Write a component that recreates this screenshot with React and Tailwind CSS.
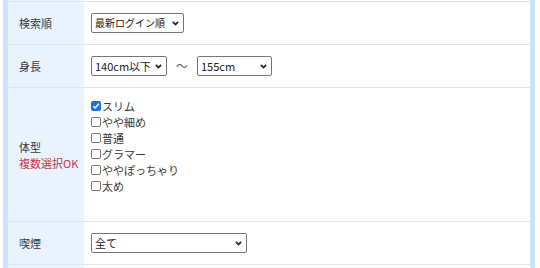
const FONT = "font-['Meiryo','Noto_Sans_CJK_JP','Noto_Sans',sans-serif]";

const BODY_TYPES = [
  { label: 'スリム', checked: true },
  { label: 'やや細め' },
  { label: '普通' },
  { label: 'グラマー' },
  { label: 'ややぽっちゃり' },
  { label: '太め' },
];

// ── Select-like box with chrome chevron ─────────────────────────────────────
function Chevron() {
  return (
    <svg width="7" height="5" viewBox="0 0 7 5" className="shrink-0">
      <path d="M0.9 0.9 L3.5 3.6 L6.1 0.9" fill="none" stroke="#222" strokeWidth="1.7" />
    </svg>
  );
}

function SelectBox({ value, width, small }) {
  return (
    <div
      className={`h-[20px] flex items-center justify-between gap-[3px] pl-[3px] pr-[4px] border border-[#767676] rounded-[2px] bg-white text-[#222] leading-none ${small ? 'text-[10px]' : 'text-[11px]'}`}
      style={{ width }}
    >
      <span className="whitespace-nowrap">{value}</span>
      <Chevron />
    </div>
  );
}

function Checkbox({ checked }) {
  if (checked) {
    return (
      <span className="w-[10px] h-[10px] rounded-[2px] bg-[#1a73e8] flex items-center justify-center shrink-0">
        <svg width="8" height="8" viewBox="0 0 8 8">
          <path d="M1.3 4.2 L3.2 6 L6.8 1.8" fill="none" stroke="#fff" strokeWidth="1.5" />
        </svg>
      </span>
    );
  }
  return <span className="w-[10px] h-[10px] rounded-[2px] border border-[#767676] bg-white shrink-0" />;
}

function Row({ label, sub, height, children, align = 'center' }) {
  return (
    <div className="grid grid-cols-[76px_1fr] border-t border-[#e2e6ea]" style={{ height }}>
      <div className="bg-[#e9f3fd] flex flex-col justify-center pl-[11px] text-[11px] leading-[16px] text-[#3a3a3a]">
        <span>{label}</span>
        {sub && <span className="text-[#d6304c]">{sub}</span>}
      </div>
      <div className={`bg-white pl-[7px] flex ${align === 'top' ? 'items-start pt-[10px]' : 'items-center'}`}>
        {children}
      </div>
    </div>
  );
}

export default function App() {
  return (
    <div className={`w-[540px] h-[268px] overflow-hidden bg-white pl-[3px] ${FONT}`}>
      <div className="w-[532px] border-x-[5px] border-[#cde2f8]">
        {/* clipped top of previous row */}
        <div className="grid grid-cols-[76px_1fr] h-[1px]">
          <div className="bg-[#e9f3fd]" />
          <div />
        </div>

        <Row label="検索順" height={43}>
          <SelectBox value="最新ログイン順" width={93} small />
        </Row>

        <Row label="身長" height={43}>
          <div className="flex items-center">
            <SelectBox value="140cm以下" width={76} />
            <span className="mx-[9px] text-[12px] text-[#666]">〜</span>
            <SelectBox value="155cm" width={75} />
          </div>
        </Row>

        <Row label="体型" sub="複数選択OK" height={134} align="top">
          <div className="flex flex-col text-[11px] leading-[16px] text-[#3a3a3a]">
            {BODY_TYPES.map((t) => (
              <label key={t.label} className="flex items-center">
                <Checkbox checked={t.checked} />
                <span className="ml-[1px]">{t.label}</span>
              </label>
            ))}
          </div>
        </Row>

        <Row label="喫煙" height={43}>
          <SelectBox value="全て" width={156} />
        </Row>

        <div className="grid grid-cols-[76px_1fr] border-t border-[#e2e6ea] h-[10px]">
          <div className="bg-[#e9f3fd]" />
          <div />
        </div>
      </div>
    </div>
  );
}
